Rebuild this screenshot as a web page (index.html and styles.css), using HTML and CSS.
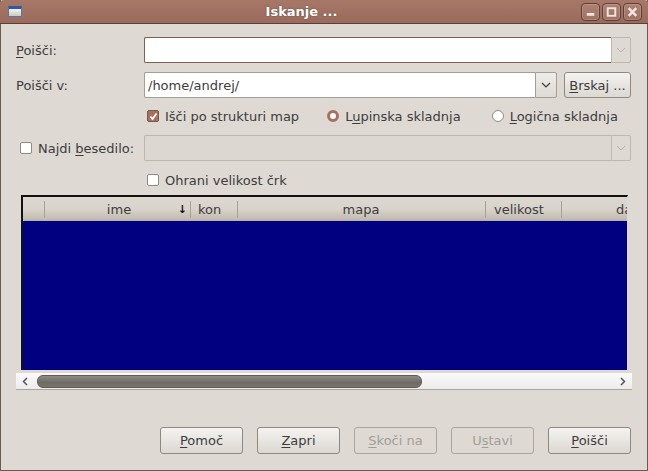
FILE: index.html
```html
<!DOCTYPE html>
<html>
<head>
<meta charset="utf-8">
<link rel="stylesheet" href="styles.css">
</head>
<body>
<div class="window">
  <div class="titlebar">
    <div class="ticon"></div>
    <div class="ttext">Iskanje ...</div>
    <div class="tbtns">
      <div class="tbtn"><svg width="18" height="18" viewBox="0 0 18 18"><rect x="5" y="10" width="8" height="3" fill="#f0e6e2"/></svg></div>
      <div class="tbtn"><svg width="18" height="18" viewBox="0 0 18 18"><rect x="5" y="5" width="8" height="8" fill="none" stroke="#f0e6e2" stroke-width="2"/></svg></div>
      <div class="tbtn"><svg width="18" height="18" viewBox="0 0 18 18"><path d="M5 5 L13 13 M13 5 L5 13" stroke="#f0e6e2" stroke-width="2.6"/></svg></div>
    </div>
  </div>
  <div class="content">
    <div class="row r1">
      <div class="label"><u>P</u>oišči:</div>
      <div class="combo focus">
        <div class="entry"></div>
        <div class="arrow dis"><svg width="10" height="6" viewBox="0 0 10 6"><path d="M1 1 L5 5 L9 1" fill="none" stroke="#b5b0a8" stroke-width="1"/></svg></div>
      </div>
    </div>
    <div class="row r2">
      <div class="label">Poišči v:</div>
      <div class="combo cv">
        <div class="entry">/home/andrej/</div>
        <div class="arrow"><svg width="10" height="6" viewBox="0 0 10 6"><path d="M1 1 L5 5 L9 1" fill="none" stroke="#3c3c3c" stroke-width="1.2"/></svg></div>
      </div>
      <div class="btn brskaj"><span><u>B</u>rskaj ...</span></div>
    </div>
    <div class="row r3">
      <div class="opt o1"><span class="cb checked"><svg width="9" height="9" viewBox="0 0 9 9"><path d="M1.5 4.5 L3.5 7 L7.5 1.5" fill="none" stroke="#fff" stroke-width="1.8"/></svg></span><span>Išči po strukturi map</span></div>
      <div class="opt o2"><span class="rb checked"></span><span>L<u>u</u>pinska skladnja</span></div>
      <div class="opt o3"><span class="rb"></span><span><u>L</u>ogična skladnja</span></div>
    </div>
    <div class="row r4">
      <div class="label lcb"><span class="cb"></span><span>Najdi <u>b</u>esedilo:</span></div>
      <div class="combo disabled">
        <div class="entry"></div>
        <div class="arrow dis"><svg width="10" height="6" viewBox="0 0 10 6"><path d="M1 1 L5 5 L9 1" fill="none" stroke="#b5b0a8" stroke-width="1"/></svg></div>
      </div>
    </div>
    <div class="row r5">
      <div class="opt o1"><span class="cb"></span><span>Ohrani velikost črk</span></div>
    </div>
    <div class="table">
      <div class="thead">
        <div class="th h0"></div>
        <div class="th h1">ime<span class="sort">↓</span></div>
        <div class="th h2">kon</div>
        <div class="th h3">mapa</div>
        <div class="th h4">velikost</div>
        <div class="th h5"><span class="clip">datum</span></div>
      </div>
      <div class="tbody"></div>
    </div>
    <div class="hscroll">
      <div class="sarrow"><svg width="6" height="9" viewBox="0 0 6 9"><path d="M5 1 L1.5 4.5 L5 8" fill="none" stroke="#555" stroke-width="1.5"/></svg></div>
      <div class="trough"><div class="thumb"></div></div>
      <div class="sarrow"><svg width="6" height="9" viewBox="0 0 6 9"><path d="M1 1 L4.5 4.5 L1 8" fill="none" stroke="#555" stroke-width="1.5"/></svg></div>
    </div>
    <div class="buttons">
      <div class="btn"><span><u>P</u>omoč</span></div>
      <div class="btn"><span><u>Z</u>apri</span></div>
      <div class="btn dis"><span><u>S</u>koči na</span></div>
      <div class="btn dis"><span>U<u>s</u>tavi</span></div>
      <div class="btn"><span><u>P</u>oišči</span></div>
    </div>
  </div>
</div>
</body>
</html>
```
FILE: styles.css
```css
* { box-sizing: border-box; }
body { margin: 0; background: #dedad3; font-family: "DejaVu Sans", sans-serif; font-size: 13px; color: #3c3c3c; }
u { text-decoration: underline; text-underline-offset: 2px; }
.window { width: 648px; height: 471px; background: #dedad3; border-left: 1px solid #6b5a52; border-right: 1px solid #6b5a52; border-bottom: 1px solid #6b5a52; display: flex; flex-direction: column; }
.titlebar { height: 24px; background: linear-gradient(#a77768, #9a6b5d); border-bottom: 1px solid #5a4038; border-radius: 4px 4px 0 0; display: flex; align-items: center; margin: 0 -1px; flex: none; }
.ticon { width: 14px; height: 11px; margin-left: 8px; border: 1px solid #5874a8; border-top: 3px solid #3358a8; background: linear-gradient(#f2f2f0, #c9c9c6); flex: none; }
.ttext { flex: 1; text-align: center; color: #fff; font-weight: bold; font-size: 13px; text-shadow: 0 0 2px #6b4a40; }
.tbtns { display: flex; gap: 2px; margin-right: 6px; margin-top: 1px; }
.tbtn { width: 19px; height: 18px; border: 1px solid #5e4036; border-radius: 4px; background: linear-gradient(#ae8272, #9e7163); box-shadow: inset 0 0 0 1px rgba(255,255,255,0.15); display: flex; align-items: center; justify-content: center; }
.content { padding: 13px 16px 0 15px; display: flex; flex-direction: column; flex: 1; }
.row { display: flex; align-items: center; flex: none; }
.label { width: 128px; flex: none; }
.r1 { height: 26px; }
.r2 { height: 26px; margin-top: 9px; }
.r3 { height: 20px; margin-top: 8px; padding-left: 131px; }
.r4 { height: 26px; margin-top: 9px; }
.r5 { height: 20px; margin-top: 9px; padding-left: 131px; }
.combo { flex: 1; display: flex; height: 26px; }
.entry { flex: 1; background: #fff; border: 1px solid #a39e96; border-right: none; border-radius: 2px 0 0 2px; padding: 0 3px; display: flex; align-items: center; }
.combo.focus .entry { border-color: #7e5f52; }
.combo.disabled .entry { background: #dcd8d1; border-color: #bcb7af; }
.arrow { width: 22px; border: 1px solid #a39e96; border-radius: 0 2px 2px 0; background: linear-gradient(#efede9, #dedad4); display: flex; align-items: center; justify-content: center; flex: none; }
.arrow.dis { border-color: #bcb7af; background: #dedad3; width: 20px; }
.cv { flex: none; width: 413px; }
.btn { display: flex; align-items: center; justify-content: center; height: 27px; border: 1px solid #8d8880; border-radius: 3px; background: linear-gradient(#f4f3f1, #dcd8d2); color: #3c3c3c; flex: none; }
.btn.dis { background: #dedad3; border-color: #aaa59e; color: #a29e97; }
.brskaj { width: 67px; height: 26px; margin-left: 7px; }
.opt { display: flex; align-items: center; }
.o2 { margin-left: 28px; }
.o3 { margin-left: 31px; }
.cb { width: 12px; height: 12px; border: 1px solid #8e8a84; border-radius: 2px; background: #fff; margin-right: 6px; display: inline-flex; align-items: center; justify-content: center; flex: none; }
.cb.checked { background: #a8705f; border-color: #7b5548; }
.rb { width: 12px; height: 12px; border: 1px solid #8e8a84; border-radius: 50%; background: #fff; margin-right: 6px; flex: none; }
.rb.checked { border: 3px solid #a8705f; }
.lcb { padding-left: 4px; display: flex; align-items: center; }
.table { margin-top: 5px; margin-left: 5px; width: 607px; height: 175px; border: 2px solid #111; border-right: 1px solid #dedad3; border-bottom: none; display: flex; flex-direction: column; background: #000080; flex: none; }
.thead { height: 24px; display: flex; background: linear-gradient(#dcd7cf 0%, #d8d3cb 50%, #c3bcb1 92%, #b6afa4 100%); flex: none; }
.th { position: relative; display: flex; align-items: center; justify-content: center; color: #3c3c3c; flex: none; }
.th + .th::before { content: ""; position: absolute; left: 0; top: 4px; height: 17px; width: 1px; background: #a8a196; }
.h0 { width: 21px; }
.h1 { width: 146px; padding-left: 4px; }
.h2 { width: 47px; justify-content: flex-start; padding-left: 8px; }
.h3 { width: 248px; }
.h4 { width: 76px; justify-content: flex-start; padding-left: 9px; }
.h5 { flex: 1; justify-content: flex-start; overflow: hidden; padding-left: 55px; white-space: nowrap; }
.sort { position: absolute; right: 3px; font-size: 11px; font-weight: bold; color: #111; }
.tbody { flex: 1; background: #000080; }
.hscroll { margin-top: 3px; width: 616px; height: 17px; display: flex; align-items: center; background: linear-gradient(#fafafa, #ececec); border-bottom: 1px solid #a9a49c; flex: none; }
.sarrow { width: 18px; display: flex; justify-content: center; align-items: center; flex: none; }
.trough { flex: 1; height: 13px; padding-left: 3px; }
.thumb { width: 385px; height: 13px; border: 1px solid #5e5a55; border-radius: 6px; background: linear-gradient(#8e8a84, #6e6a64 60%, #7a766f); }
.buttons { display: flex; justify-content: flex-end; gap: 14px; margin-top: auto; margin-bottom: 16px; }
.buttons .btn { width: 83px; }
```
